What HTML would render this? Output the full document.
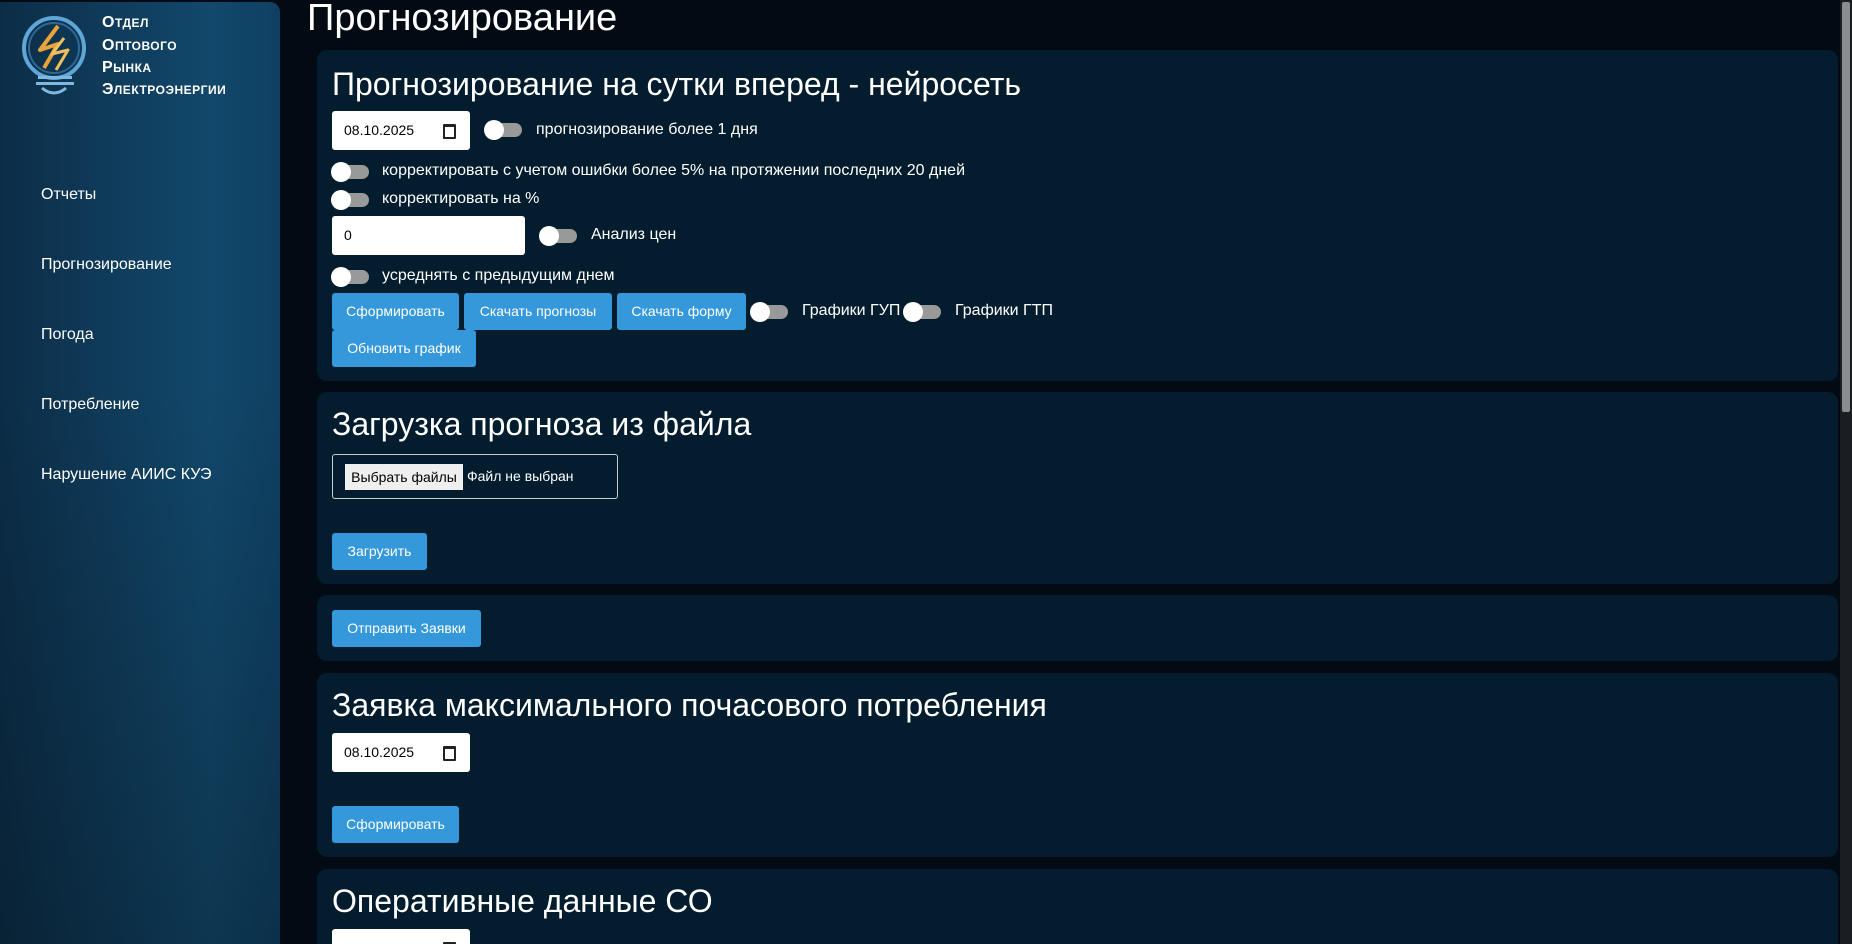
<!DOCTYPE html>
<html style="overflow:hidden;width:1852px;height:944px"><head><meta charset="utf-8"><style>
*{box-sizing:border-box;margin:0;padding:0}
body{width:1852px;height:944px;overflow:hidden;background:#020a13;font-family:"Liberation Sans","DejaVu Sans",sans-serif;color:#fff;position:relative}
.side{position:absolute;left:0;top:2px;width:280px;height:942px;border-radius:0 10px 0 0;background:linear-gradient(90deg,#0c2d47 0%,#12486b 75%,#0f4062 100%)}
.side:after{content:"";position:absolute;inset:0;background:linear-gradient(180deg,rgba(0,0,0,0) 0%,rgba(0,0,0,0) 40%,rgba(0,0,0,.25) 100%);border-radius:0 10px 0 0}
.menu{position:absolute;left:41px;font-size:16px;color:#fff;z-index:2}
.logo{position:absolute;left:14px;top:12px;z-index:2}
.lt{position:absolute;left:102px;font-family:"Liberation Sans",sans-serif;font-weight:bold;font-size:12px;letter-spacing:.5px;z-index:2;color:#fff}
.lt b{font-size:16px}
h1{position:absolute;left:307px;top:-3px;font-size:38px;font-weight:normal}
.card{position:absolute;left:317px;width:1521px;background:#031d2e;border-radius:10px;overflow:hidden}
h2{position:absolute;left:15px;font-size:32px;font-weight:normal;white-space:nowrap}
.date{position:absolute;width:138px;height:39px;background:#fff;border-radius:3px;color:#000;font-size:14px;padding:11px 0 0 12px}
.date:after{content:"";position:absolute;right:14px;top:13px;width:9px;height:10px;border:2px solid #222;border-top-width:3px;border-radius:1px}
.num:after{display:none}
.tg{position:absolute;width:37px;height:14px;background:#999;border-radius:7px}
.tg:before{content:"";position:absolute;left:-1px;top:-3px;width:20px;height:20px;border-radius:50%;background:#fff}
.lb{position:absolute;font-size:16px;white-space:nowrap}
.btn{position:absolute;height:37px;background:#3498db;border-radius:3px;font-size:14px;color:#fff;text-align:center;line-height:37px}
.sb{position:absolute;right:0;top:0;width:12px;height:944px;background:#1a1d21}
.sb div{position:absolute;left:2px;top:2px;width:8px;height:410px;background:#8a8d90;border-radius:2px}
</style></head><body>
<div class="side"></div>
<svg class="logo" width="80" height="90" viewBox="0 0 80 90">
<circle cx="40" cy="36" r="30" fill="none" stroke="#5fa6d6" stroke-width="4"/>
<circle cx="40" cy="36" r="25" fill="none" stroke="#2c6a96" stroke-width="2"/>
<path d="M44 14 L26 38 L44 32 L30 56" fill="none" stroke="#e8a43a" stroke-width="4" stroke-linejoin="round"/>
<path d="M50 26 L38 42 L54 38 L42 58" fill="none" stroke="#f0c060" stroke-width="3" stroke-linejoin="round"/>
<rect x="24" y="64" width="34" height="3" fill="#7fb8e0"/><rect x="22" y="70" width="38" height="3" fill="#7fb8e0"/>
<path d="M28 76 Q40 86 52 76" fill="none" stroke="#7fb8e0" stroke-width="3"/>
</svg>
<div class="lt" style="top:14px"><b>О</b>ТДЕЛ</div>
<div class="lt" style="top:37px"><b>О</b>ПТОВОГО</div>
<div class="lt" style="top:59px"><b>Р</b>ЫНКА</div>
<div class="lt" style="top:81px"><b>Э</b>ЛЕКТРОЭНЕРГИИ</div>
<div class="menu" style="top:186px">Отчеты</div>
<div class="menu" style="top:256px">Прогнозирование</div>
<div class="menu" style="top:326px">Погода</div>
<div class="menu" style="top:396px">Потребление</div>
<div class="menu" style="top:466px">Нарушение АИИС КУЭ</div>

<h1>Прогнозирование</h1>

<div class="card" style="top:50px;height:331px">
<h2 style="top:16px">Прогнозирование на сутки вперед - нейросеть</h2>
<div class="date" style="left:15px;top:61px">08.10.2025</div>
<div class="tg" style="left:168px;top:73px"></div><div class="lb" style="left:219px;top:71px">прогнозирование более 1 дня</div>
<div class="tg" style="left:15px;top:115px"></div><div class="lb" style="left:65px;top:112px">корректировать с учетом ошибки более 5% на протяжении последних 20 дней</div>
<div class="tg" style="left:15px;top:143px"></div><div class="lb" style="left:65px;top:140px">корректировать на %</div>
<div class="date num" style="left:15px;top:166px;width:193px">0</div>
<div class="tg" style="left:223px;top:179px"></div><div class="lb" style="left:274px;top:176px">Анализ цен</div>
<div class="tg" style="left:15px;top:220px"></div><div class="lb" style="left:65px;top:217px">усреднять с предыдущим днем</div>
<div class="btn" style="left:15px;top:243px;width:127px">Сформировать</div>
<div class="btn" style="left:147px;top:243px;width:148px">Скачать прогнозы</div>
<div class="btn" style="left:300px;top:243px;width:129px">Скачать форму</div>
<div class="tg" style="left:434px;top:255px"></div><div class="lb" style="left:485px;top:252px">Графики ГУП</div>
<div class="tg" style="left:587px;top:255px"></div><div class="lb" style="left:638px;top:252px">Графики ГТП</div>
<div class="btn" style="left:15px;top:280px;width:144px">Обновить график</div>
</div>

<div class="card" style="top:392px;height:192px">
<h2 style="top:14px">Загрузка прогноза из файла</h2>
<div style="position:absolute;left:15px;top:62px;width:286px;height:45px;border:1px solid #ccc;border-radius:3px">
<div style="position:absolute;left:12px;top:9px;width:118px;height:26px;background:#efefef;color:#000;font-size:14px;line-height:26px;text-align:center">Выбрать файлы</div>
<div style="position:absolute;left:134px;top:13px;font-size:14px">Файл не выбран</div></div>
<div class="btn" style="left:15px;top:141px;width:95px">Загрузить</div>
</div>

<div class="card" style="top:595px;height:66px">
<div class="btn" style="left:15px;top:15px;width:149px">Отправить Заявки</div>
</div>

<div class="card" style="top:673px;height:184px">
<h2 style="top:14px">Заявка максимального почасового потребления</h2>
<div class="date" style="left:15px;top:60px">08.10.2025</div>
<div class="btn" style="left:15px;top:133px;width:127px">Сформировать</div>
</div>

<div class="card" style="top:869px;height:75px;border-radius:10px 10px 0 0">
<h2 style="top:14px">Оперативные данные СО</h2>
<div class="date" style="left:15px;top:60px"></div>
</div>

<div class="sb"><div></div></div>
</body></html>
